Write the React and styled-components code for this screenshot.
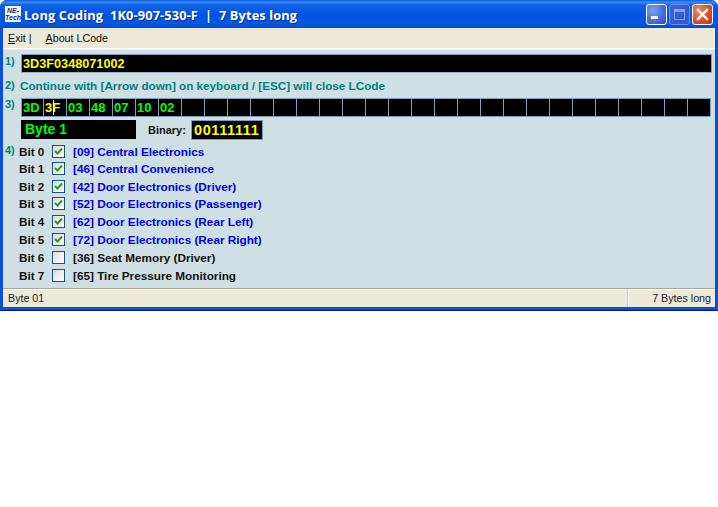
import React from "react";
import styled, { createGlobalStyle } from "styled-components";

const Global = createGlobalStyle`
  html, body { margin: 0; padding: 0; background: #fff; }
  body { width: 718px; height: 507px; overflow: hidden; font-family: "Liberation Sans", Arial, sans-serif; }
`;

const Win = styled.div`
  width: 718px; height: 311px; box-sizing: border-box;
  background: #0a4fd8; border-radius: 7px 7px 0 0;
  display: flex; flex-direction: column;
  padding: 0 3px 3px;
  border-bottom: 1px solid #00138c;
`;
const TitleBar = styled.div`
  height: 28px; margin: 0 -3px; padding: 0 3px 0 5px; flex: none;
  display: flex; align-items: center; gap: 3px;
  border-radius: 7px 7px 0 0;
  background: linear-gradient(180deg, #0a5be0 0%, #3b8cf8 8%, #0f61e8 18%, #0453dc 55%, #0458e4 85%, #0449c8 100%);
`;
const Logo = styled.div`
  width: 16px; height: 16px; background: #fff; flex: none;
  display: flex; flex-direction: column; align-items: center; justify-content: center;
  font: italic bold 7px/7px "Liberation Sans", sans-serif; color: #10189a;
`;
const Title = styled.div`
  flex: 1; color: #fff; font-weight: bold; font-size: 12.8px; white-space: pre;
  font-family: "Open Sans", "Liberation Sans", sans-serif; letter-spacing: 0.12px;
  text-shadow: 1px 1px 0 #0a2f90; padding-top: 1px;
`;
const Btns = styled.div`display: flex; gap: 2px; margin-right: 2px; padding-top: 1px;`;
const WinBtn = styled.div`
  width: 21px; height: 21px; box-sizing: border-box; border: 1px solid ${p => p.$dim ? "#6f8fe8" : "#fff"};
  border-radius: 3px; display: flex; align-items: center; justify-content: center;
  background: ${p => p.$close
    ? "radial-gradient(circle at 30% 30%, #e88a6c, #d44c28 60%, #b83414)"
    : p.$dim
      ? "linear-gradient(135deg, #3c64dc, #2f55d0)"
      : "radial-gradient(circle at 30% 30%, #7a9ef0, #3b63dc 70%, #2a4cc8)"};
`;
const MenuBar = styled.div`
  height: 21px; flex: none; background: #ece9d8; display: flex; align-items: center;
  padding: 0 0 1px 5px; font-size: 10.7px; color: #111; box-sizing: border-box;
  border-bottom: 1px solid #fff;
`;
const MenuItem = styled.span`
  margin-right: ${p => p.$gap}px; white-space: pre;
  u { text-decoration: underline; }
`;
const Content = styled.div`
  flex: 1; background: #cfe0e4; padding: 4px 3px 0 2px; display: flex; flex-direction: column; min-height: 0;
  border-top: 1px solid #e6eef0;
`;
const Row = styled.div`
  display: flex; align-items: ${p => p.$align || "flex-start"}; margin-top: ${p => p.$mt || 0}px; height: ${p => p.$h}px; flex: none;
`;
const Num = styled.div`
  width: 16px; flex: none; color: #007f80; font-weight: bold; font-size: 11px; line-height: 13px;
  margin-top: ${p => p.$mt || 0}px;
`;
const CodeField = styled.div`
  flex: 1; height: 19px; background: #000; color: #ff0; font-weight: bold; font-size: 12.7px;
  line-height: 18px; padding-left: 1px; box-sizing: border-box; border-top: 1px solid #7f9db9; border-left: 1px solid #7f9db9;
  border-right: 1px solid #7f9db9; border-bottom: 1px solid #9fb4c4;
`;
const Hint = styled.div`
  color: #007f80; font-weight: bold; font-size: 11.7px; line-height: 16px; margin-left: -1px;
`;
const Cells = styled.div`display: flex; flex: 1;`;
const Cell = styled.div`
  width: 23px; height: 19px; flex: none; box-sizing: border-box; background: #000;
  border: 1px solid #7f9db9; border-left-width: ${p => p.$first ? 1 : 0}px;
  color: ${p => p.$active ? "#ff0" : "#0f0"}; font-weight: bold; font-size: 13px; line-height: 18px;
  padding-left: 1px; white-space: nowrap; position: relative;
`;
const Caret = styled.span`
  position: absolute; left: 9px; top: 1px; width: 1px; height: 15px; background: #fff;
`;
const ByteBox = styled.div`
  width: 115px; height: 19px; background: #000; color: #0f0; font-weight: bold; font-size: 14px;
  line-height: 18px; padding-left: 4px; box-sizing: border-box; margin-left: 16px; flex: none;
`;
const BinLabel = styled.div`
  margin-left: 12px; width: 43px; font-weight: bold; font-size: 11px; color: #111; line-height: 21px; flex: none;
`;
const BinBox = styled.div`
  width: 72px; height: 20px; box-sizing: border-box; background: #000; color: #ff0; font-weight: bold; font-size: 14.5px;
  letter-spacing: 0.6px; line-height: 18px; padding-left: 2px; border: 1px solid #7f9db9; flex: none; overflow: hidden;
`;
const Bits = styled.div`display: flex; align-items: flex-start; margin-top: 2px;`;
const BitList = styled.div`display: flex; flex-direction: column;`;
const BitRow = styled.div`
  display: flex; align-items: center; height: ${p => p.$h}px;
`;
const BitName = styled.div`width: 33px; font-weight: bold; font-size: 11.7px; color: #111; margin-left: -2px; flex: none;`;
const Check = styled.div`
  width: 13px; height: 13px; box-sizing: border-box; border: 1px solid #1c5180; background: linear-gradient(135deg,#dcdcd7,#fff);
  display: flex; align-items: center; justify-content: center; margin-right: 8px; flex: none;
`;
const BitText = styled.div`
  font-weight: bold; font-size: 11.75px; color: ${p => p.$on ? "#0000e0" : "#111"}; white-space: nowrap;
`;
const StatusBar = styled.div`
  height: 19px; flex: none; background: #ece9d8; border-top: 1px solid #a9a796; box-shadow: inset 0 1px 0 #fff;
  display: flex; font-size: 10.7px; color: #222; box-sizing: border-box; line-height: 19px;
`;
const StatusL = styled.div`flex: 1; padding-left: 5px; border-right: 1px solid #c9c6b4;`;
const StatusR = styled.div`width: 87px; box-sizing: border-box; text-align: right; padding-right: 4px; border-left: 1px solid #fff;`;

const bytes = ["3D", "3F", "03", "48", "07", "10", "02"];
const bits = [
  ["[09] Central Electronics", 1, 17],
  ["[46] Central Convenience", 1, 17],
  ["[42] Door Electronics (Driver)", 1, 18],
  ["[52] Door Electronics (Passenger)", 1, 17],
  ["[62] Door Electronics (Rear Left)", 1, 18],
  ["[72] Door Electronics (Rear Right)", 1, 18],
  ["[36] Seat Memory (Driver)", 0, 18],
  ["[65] Tire Pressure Monitoring", 0, 18],
];

export default function App() {
  return (
    <>
      <Global />
      <Win>
        <TitleBar>
          <Logo><span>NE-</span><span>Tech</span></Logo>
          <Title>Long Coding  1K0-907-530-F  |  7 Bytes long</Title>
          <Btns>
            <WinBtn>
              <svg width="13" height="13" viewBox="0 0 13 13"><rect x="1" y="8" width="7" height="3" fill="#fff" /></svg>
            </WinBtn>
            <WinBtn $dim>
              <svg width="13" height="13" viewBox="0 0 13 13" fill="none" stroke="#8aa4ec"><rect x="1.5" y="1.5" width="10" height="10" /><path d="M1 3h11" strokeWidth="2" /></svg>
            </WinBtn>
            <WinBtn $close>
              <svg width="13" height="13" viewBox="0 0 13 13" stroke="#fff" strokeWidth="2.4" strokeLinecap="square"><path d="M2 2l9 9M11 2l-9 9" /></svg>
            </WinBtn>
          </Btns>
        </TitleBar>
        <MenuBar>
          <MenuItem $gap={14}><u>E</u>xit |</MenuItem>
          <MenuItem $gap={0}><u>A</u>bout LCode</MenuItem>
        </MenuBar>
        <Content>
          <Row $h={19}><Num $mt={1}>1)</Num><CodeField>3D3F0348071002</CodeField></Row>
          <Row $h={16} $mt={5}><Num $mt={1}>2)</Num><Hint>Continue with [Arrow down] on keyboard / [ESC] will close LCode</Hint></Row>
          <Row $h={19} $mt={4}>
            <Num>3)</Num>
            <Cells>
              {Array.from({ length: 30 }, (_, i) => (
                <Cell key={i} $first={i === 0} $active={i === 1}>
                  {bytes[i]}{i === 1 && <Caret />}
                </Cell>
              ))}
            </Cells>
          </Row>
          <Row $h={21} $mt={3}>
            <ByteBox>Byte 1</ByteBox>
            <BinLabel>Binary:</BinLabel>
            <BinBox>00111111</BinBox>
          </Row>
          <Bits>
            <Num $mt={1}>4)</Num>
            <BitList>
              {bits.map(([t, on, h], i) => (
                <BitRow key={i} $h={h}>
                  <BitName>Bit {i}</BitName>
                  <Check>
                    {on ? (
                      <svg width="9" height="9" viewBox="0 0 9 9" fill="none" stroke="#21a121" strokeWidth="2"><path d="M1 4l2.5 2.5L8 1.5" /></svg>
                    ) : null}
                  </Check>
                  <BitText $on={on}>{t}</BitText>
                </BitRow>
              ))}
            </BitList>
          </Bits>
        </Content>
        <StatusBar>
          <StatusL>Byte 01</StatusL>
          <StatusR>7 Bytes long</StatusR>
        </StatusBar>
      </Win>
    </>
  );
}
